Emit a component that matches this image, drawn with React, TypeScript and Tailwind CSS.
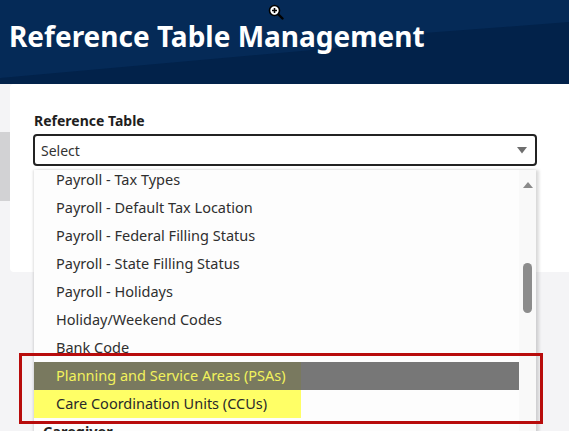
import React from "react";

const items = [
  "Payroll - Tax Types",
  "Payroll - Default Tax Location",
  "Payroll - Federal Filling Status",
  "Payroll - State Filling Status",
  "Payroll - Holidays",
  "Holiday/Weekend Codes",
  "Bank Code",
];

function ZoomCursor() {
  return (
    <svg width="16" height="16" viewBox="0 0 16 16" className="absolute left-[268px] top-[4px]">
      <line x1="9" y1="9" x2="14.5" y2="14.5" stroke="#000" strokeWidth="2.4" strokeLinecap="round" />
      <circle cx="6.5" cy="6.5" r="5" fill="#fff" stroke="#000" strokeWidth="1.6" />
      <path d="M6.5 4v5M4 6.5h5" stroke="#000" strokeWidth="1.6" />
    </svg>
  );
}

export default function App() {
  return (
    <div
      className="relative w-[569px] h-[431px] overflow-hidden bg-[#f4f4f6]"
      style={{ fontFamily: '"Noto Sans", "Open Sans", sans-serif' }}
    >
      {/* header */}
      <div className="relative h-[84px] bg-[#052a57] overflow-hidden">
        <svg className="absolute inset-0" width="569" height="84" viewBox="0 0 569 84">
          <polygon points="0,78 424,40 424,33 569,22 569,84 0,84" fill="#02224a" />
        </svg>
        <h1 className="relative pl-[9px] pt-[17px] text-[28px] font-bold leading-[38px] text-white">
          Reference Table Management
        </h1>
        <ZoomCursor />
      </div>

      <div className="flex">
        <div className="w-[10px] shrink-0">
          <div className="mt-[48px] h-[69px] bg-[#d2d2d4]" />
        </div>
        <div className="w-[620px] shrink-0 h-[188px] bg-white rounded-[4px] pl-[23px] pt-[27px]">
          <div className="text-[14px] font-bold leading-[20px] text-[#1e1e1e] pl-[1px]">Reference Table</div>
          <div className="mt-[3px] w-[504px] h-[32px] border-2 border-[#232323] rounded-[4px] flex items-center justify-between pl-[6px] pr-[8px]">
            <span className="text-[14px] text-[#333]">Select</span>
            <svg width="10" height="7" viewBox="0 0 10 7">
              <polygon points="0,0 10,0 5,6.5" fill="#6e6e6e" />
            </svg>
          </div>
        </div>
      </div>

      {/* open dropdown list */}
      <div className="absolute left-[34px] top-[170px] w-[502px] h-[270px] bg-[#fdfdfd] shadow-[-1px_0_2px_rgba(0,0,0,0.12),3px_0_3px_rgba(0,0,0,0.14)] overflow-hidden flex">
        <div className="flex-1 -mt-[4px]">
          {items.map((t) => (
            <div key={t} className="h-[28px] flex items-center pl-[22px] text-[14.5px] text-[#2f2f2f]">
              {t}
            </div>
          ))}
          <div className="h-[28px] flex bg-[#777777]">
            <div className="w-[267px] bg-[#79795f] flex items-center pl-[22px] text-[14.5px] text-[#f2f25c]">
              Planning and Service Areas (PSAs)
            </div>
          </div>
          <div className="h-[28px] flex">
            <div className="w-[267px] bg-[#ffff66] flex items-center pl-[22px] text-[14.5px] text-[#2a2a2a]">
              Care Coordination Units (CCUs)
            </div>
          </div>
          <div className="h-[28px] flex items-center pl-[9px] text-[14.5px] font-bold text-[#222]">Caregiver</div>
        </div>
        <div className="w-[17px] bg-[#f9f9f9] flex flex-col items-center pt-[12px]">
          <svg width="10" height="6" viewBox="0 0 10 6">
            <polygon points="5,0 10,6 0,6" fill="#8a8a8a" />
          </svg>
          <div className="mt-[75px] w-[9px] h-[50px] rounded-full bg-[#8c8c8c]" />
        </div>
      </div>

      {/* annotation box */}
      <div className="absolute left-[19px] top-[353px] w-[524px] h-[71px] border-[3px] border-[#b80c0c]" />
    </div>
  );
}
